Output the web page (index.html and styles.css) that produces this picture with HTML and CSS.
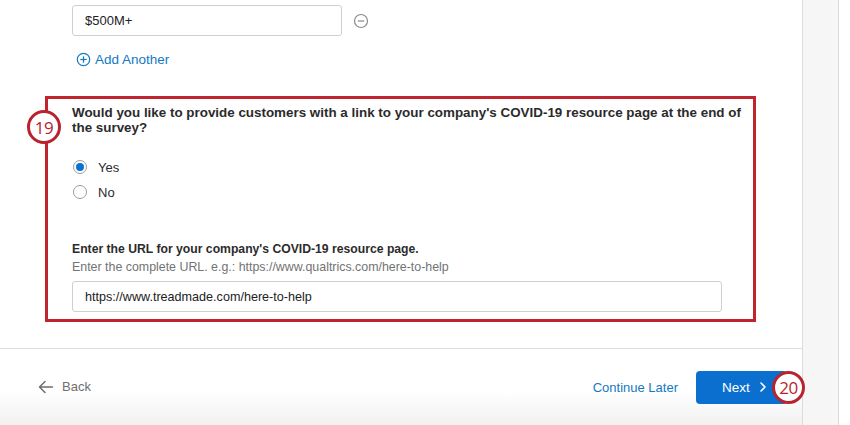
FILE: index.html
```html
<!DOCTYPE html>
<html>
<head>
<meta charset="utf-8">
<link rel="stylesheet" href="styles.css">
</head>
<body>
<div class="page">
  <div class="panel">
    <div class="content">
      <div class="field-row">
        <div class="input small-input">$500M+</div>
        <svg class="minus" width="16" height="16" viewBox="0 0 16 16"><circle cx="8" cy="8" r="6.5" fill="none" stroke="#8a8a8a" stroke-width="1.2"/><line x1="4.8" y1="8" x2="11.2" y2="8" stroke="#8a8a8a" stroke-width="1.2"/></svg>
      </div>
      <div class="add-row">
        <svg width="15" height="15" viewBox="0 0 16 16"><circle cx="8" cy="8" r="6.6" fill="none" stroke="#1479c4" stroke-width="1.3"/><line x1="4.6" y1="8" x2="11.4" y2="8" stroke="#1479c4" stroke-width="1.3"/><line x1="8" y1="4.6" x2="8" y2="11.4" stroke="#1479c4" stroke-width="1.3"/></svg>
        <span>Add Another</span>
      </div>
      <div class="callout">
        <div class="badge badge-19">19</div>
        <div class="question">Would you like to provide customers with a link to your company's COVID-19 resource page at the end of the survey?</div>
        <div class="radios">
          <div class="radio-row"><span class="radio checked"></span><span>Yes</span></div>
          <div class="radio-row"><span class="radio"></span><span>No</span></div>
        </div>
        <div class="label">Enter the URL for your company's COVID-19 resource page.</div>
        <div class="hint">Enter the complete URL. e.g.: https://www.qualtrics.com/here-to-help</div>
        <div class="input url-input">https://www.treadmade.com/here-to-help</div>
      </div>
    </div>
    <div class="footer">
      <div class="back">
        <svg width="16" height="14" viewBox="0 0 16 14"><path d="M7 1.5 L1.5 7 L7 12.5 M1.5 7 H14.5" fill="none" stroke="#6e6e6e" stroke-width="1.5" stroke-linecap="round" stroke-linejoin="round"/></svg>
        <span>Back</span>
      </div>
      <div class="actions">
        <span class="later">Continue Later</span>
        <div class="next">
          <span>Next</span>
          <svg width="8" height="12" viewBox="0 0 8 12"><path d="M2 2 L6 6 L2 10" fill="none" stroke="#fff" stroke-width="1.6" stroke-linecap="round" stroke-linejoin="round"/></svg>
          <div class="badge badge-20">20</div>
        </div>
      </div>
    </div>
  </div>
  <div class="strip"></div>
  <div class="edge"></div>
</div>
</body>
</html>
```

FILE: styles.css
```css
* { box-sizing: border-box; }
html, body { margin: 0; padding: 0; background: #fff; }
body {
  font-family: "Liberation Sans", Arial, sans-serif;
  color: #2b2b2b;
  width: 850px;
  height: 425px;
  overflow: hidden;
}
.page {
  display: flex;
  height: 425px;
}
.panel {
  width: 802px;
  display: flex;
  flex-direction: column;
  height: 425px;
}
.strip {
  width: 37px;
  background: #f6f6f6;
  border-left: 1px solid #dcdcdc;
  border-right: 1px solid #dcdcdc;
}
.edge { flex: 1; background: #fff; }
.content {
  padding-top: 5px;
  height: 349px;
  border-bottom: 1px solid #dedede;
}
.field-row {
  display: flex;
  align-items: center;
  padding-left: 72px;
  gap: 11px;
}
.input {
  border: 1px solid #cfcfcf;
  border-radius: 3px;
  height: 31px;
  display: flex;
  align-items: center;
  padding-left: 12px;
  font-size: 13px;
  color: #222;
  background: #fff;
}
.small-input { width: 270px; }
.add-row {
  display: flex;
  align-items: center;
  gap: 4px;
  padding-left: 76px;
  margin-top: 15px;
  color: #1479c4;
  font-size: 13.5px;
  height: 17px;
}
.callout {
  position: relative;
  margin-left: 45px;
  margin-top: 28px;
  width: 711px;
  border: 3px solid #c0242f;
  padding: 7px 14px 7px 24px;
}
.badge {
  position: absolute;
  width: 34px;
  height: 34px;
  border-radius: 50%;
  border: 3px solid #b8232e;
  background: #fff;
  color: #b8232e;
  font-family: "Open Sans", sans-serif;
  font-size: 17px;
  display: flex;
  align-items: center;
  justify-content: center;
  letter-spacing: -0.5px;
}
.badge-19 { left: -21px; top: 11px; }
.question {
  font-weight: bold;
  font-size: 13.4px;
  line-height: 14.5px;
  width: 676px;
}
.radios {
  margin-top: 24px;
  display: flex;
  flex-direction: column;
  gap: 9px;
}
.radio-row {
  display: flex;
  align-items: center;
  gap: 11px;
  font-size: 13px;
  height: 16px;
  padding-left: 1px;
}
.radio {
  width: 14px;
  height: 14px;
  border-radius: 50%;
  border: 1px solid #9d9d9d;
  display: inline-flex;
  align-items: center;
  justify-content: center;
  background: #fff;
}
.radio.checked::after {
  content: "";
  width: 8px;
  height: 8px;
  border-radius: 50%;
  background: #0b72cf;
}
.label {
  margin-top: 41px;
  font-weight: bold;
  font-size: 12.2px;
  line-height: 16px;
}
.hint {
  font-size: 12.4px;
  color: #737373;
  line-height: 16px;
  margin-top: 2px;
}
.url-input {
  margin-top: 6px;
  width: 650px;
  font-size: 12.6px;
}
.footer {
  flex: 1;
  display: flex;
  align-items: center;
  justify-content: space-between;
  padding: 0 15px 0 38px;
  background: linear-gradient(to bottom, #fff 0%, #fff 55%, #f1f1f1 100%);
}
.back {
  display: flex;
  align-items: center;
  gap: 8px;
  color: #6e6e6e;
  font-size: 13px;
  margin-top: -1px;
}
.actions {
  display: flex;
  align-items: center;
  gap: 18px;
}
.later {
  color: #1479c4;
  font-size: 13px;
}
.next {
  position: relative;
  width: 91px;
  height: 33px;
  background: #0b6fd0;
  border-radius: 4px;
  color: #fff;
  font-size: 13.5px;
  display: flex;
  align-items: center;
  padding-left: 26px;
  gap: 9px;
}
.badge-20 { left: 76px; top: 0px; width: 33px; height: 33px; }
```
